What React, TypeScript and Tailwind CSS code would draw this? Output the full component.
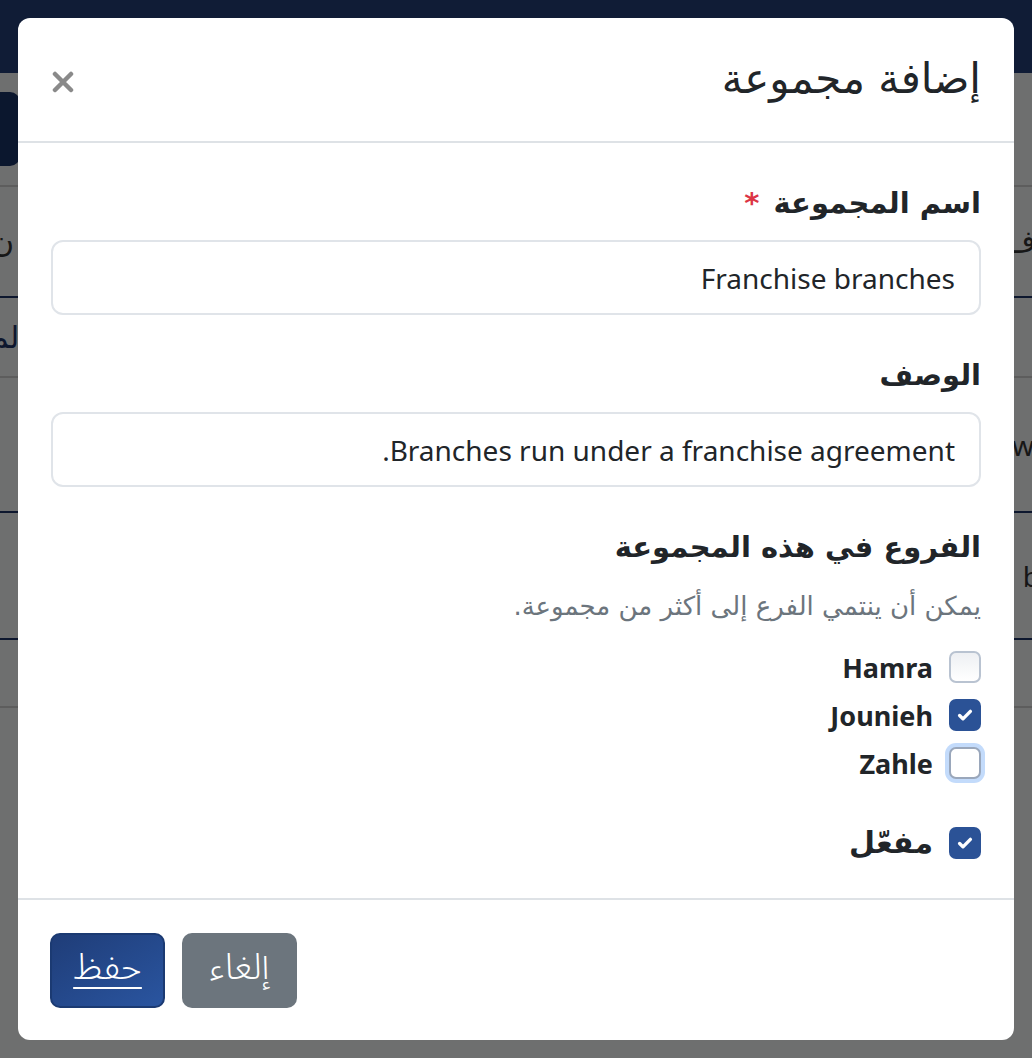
import React from "react";

const font = { fontFamily: '"Noto Sans", "DejaVu Sans", sans-serif' };
const ar = { fontFamily: '"DejaVu Sans", "Noto Sans", sans-serif' };
const arLight = { fontFamily: '"Noto Sans Arabic", "Noto Kufi Arabic", "Noto Sans", sans-serif' };

function Check({ checked, focus }: { checked?: boolean; focus?: boolean }) {
  if (checked) {
    return (
      <span className="flex h-[32px] w-[32px] shrink-0 items-center justify-center rounded-[7px] bg-[#2b5296]">
        <svg width="18" height="18" viewBox="0 0 16 16" fill="none">
          <path d="M3.2 8.4l3 3 6.6-6.6" stroke="#fff" strokeWidth="3" strokeLinecap="round" strokeLinejoin="round" />
        </svg>
      </span>
    );
  }
  if (focus) {
    return (
      <span className="flex h-[32px] w-[32px] shrink-0 rounded-[7px] border-2 border-[#9aa7bb] bg-white shadow-[0_0_0_4px_#c3dbfb]" />
    );
  }
  return <span className="flex h-[32px] w-[32px] shrink-0 rounded-[7px] border-2 border-[#b9c3d1] bg-gradient-to-b from-[#eef0f3] to-white" />;
}

function Row({ label, checked, focus, arabic }: { label: string; checked?: boolean; focus?: boolean; arabic?: boolean }) {
  return (
    <div className="flex h-[48px] items-center gap-[16px]">
      <Check checked={checked} focus={focus} />
      <span
        className={arabic ? "text-[30px] font-bold leading-none text-[#212529]" : "text-[27px] font-bold leading-none text-[#212529]"}
        style={arabic ? ar : undefined}
      >
        {label}
      </span>
    </div>
  );
}

export default function App() {
  return (
    <div className="relative h-[1058px] w-[1032px] overflow-hidden bg-[#f4f5f7]" style={font} dir="rtl">
      {/* background page */}
      <div className="h-[73px] bg-[#243f78]" />
      <div className="flex h-[112px] items-center">
        <div className="mr-auto ml-[-20px] h-[74px] w-[40px] rounded-[10px] bg-[#1a3366]" />
      </div>
      <div className="flex h-[113px] items-center justify-between border-t-2 border-b-2 border-t-[#cfcfcf] border-b-[#1e3466] text-[30px] text-[#333]" style={ar}>
        <span className="mr-[-4px]">ف</span>
        <span className="ml-[-8px]">ن</span>
      </div>
      <div className="flex h-[80px] items-center justify-end border-b-2 border-[#cfcfcf] text-[30px] text-[#1e3466]" style={ar}>
        <span className="ml-[-10px]">لم</span>
      </div>
      <div className="flex h-[135px] items-center justify-start border-b-2 border-[#1e3466] text-[28px] text-[#333]">
        <span className="mr-[-24px]" dir="ltr">ww</span>
      </div>
      <div className="flex h-[127px] items-center justify-start border-b-2 border-[#1e3466] text-[28px] text-[#333]">
        <span className="mr-[-8px]" dir="ltr">b</span>
      </div>
      <div className="h-[68px] border-b-2 border-[#cfcfcf]" />

      {/* overlay */}
      <div className="absolute inset-0 flex justify-center bg-black/55 pt-[18px]">
        <div className="flex h-[1022px] w-[996px] flex-col rounded-[12px] bg-white">
          {/* header */}
          <div className="flex h-[125px] shrink-0 items-center justify-between border-b-2 border-[#dee2e6] pl-[34px] pr-[33px]">
            <h2 className="mt-[-2px] text-[42px] font-normal leading-none text-[#212529]" style={ar}>
              إضافة مجموعة
            </h2>
            <svg width="22" height="22" viewBox="0 0 22 22" className="mt-[4px]">
              <path d="M3 3l16 16M19 3L3 19" stroke="#8a8a8a" strokeWidth="4.5" strokeLinecap="round" />
            </svg>
          </div>

          {/* body */}
          <div className="flex-1 px-[33px] pt-[41px]">
            <label className="block text-[29px] font-bold leading-[39px] text-[#212529]" style={ar}>
              اسم المجموعة <span className="mr-[4px] text-[#dc3545]">*</span>
            </label>
            <div className="mt-[17px] flex h-[75px] items-center rounded-[12px] border-2 border-[#e0e4e9] px-[24px] text-[28px] text-[#212529]">
              Franchise branches
            </div>

            <label className="mt-[41px] block text-[29px] font-bold leading-[39px] text-[#212529]" style={ar}>
              الوصف
            </label>
            <div className="mt-[17px] flex h-[75px] items-center rounded-[12px] border-2 border-[#e0e4e9] px-[24px] text-[28px] text-[#212529]">
              Branches run under a franchise agreement.
            </div>

            <div className="mt-[41px] text-[29px] font-bold leading-[39px] text-[#212529]" style={ar}>
              الفروع في هذه المجموعة
            </div>
            <div className="mt-[21px] text-[26px] leading-[36px] text-[#6c757d]" style={ar}>
              يمكن أن ينتمي الفرع إلى أكثر من مجموعة.
            </div>

            <div className="mt-[19px] flex flex-col">
              <Row label="Hamra" />
              <Row label="Jounieh" checked />
              <Row label="Zahle" focus />
            </div>

            <div className="mt-[32px]">
              <Row label="مفعّل" checked arabic />
            </div>
          </div>

          {/* footer */}
          <div className="flex h-[142px] shrink-0 items-center justify-end gap-[17px] border-t-2 border-[#dee2e6] pl-[32px] pr-[33px]">
            <button className="flex h-[75px] w-[115px] items-center justify-center rounded-[10px] bg-[#6c757d] pb-[4px] text-[36px] font-light leading-none text-white" style={arLight}>
              إلغاء
            </button>
            <button className="flex h-[75px] w-[115px] items-center justify-center rounded-[10px] border-2 border-[#1b3a72] bg-gradient-to-br from-[#1f3d78] to-[#2a55a0] pb-[4px] text-[36px] font-light leading-none text-white underline decoration-[1.5px] underline-offset-[8px]" style={arLight}>
              حفظ
            </button>
          </div>
        </div>
      </div>
    </div>
  );
}
